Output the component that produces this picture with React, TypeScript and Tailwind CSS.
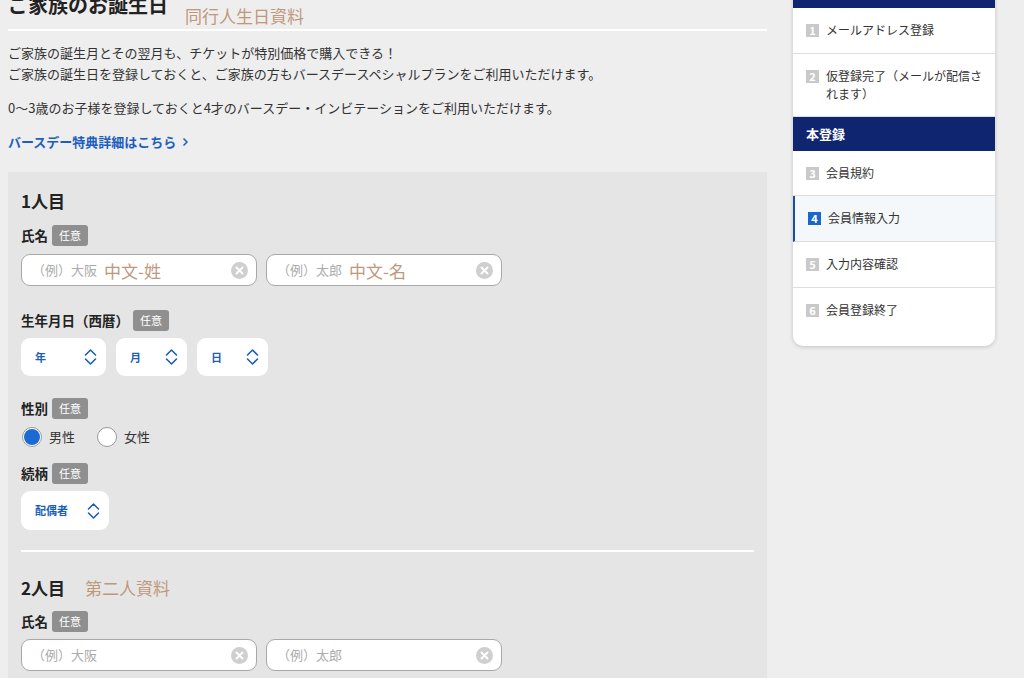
import React from "react";

const Badge = () => (
  <span className="inline-flex h-[21px] w-[36px] items-center justify-center rounded-[3px] bg-[#8f8f8f] text-[11px] leading-none text-white">
    任意
  </span>
);

const Label = ({ text }: { text: string }) => (
  <div className="flex h-[21px] items-center gap-[4px]">
    <span className="text-[13.5px] font-bold leading-none text-[#222]">{text}</span>
    <Badge />
  </div>
);

const ClearIcon = () => (
  <svg width="17" height="17" viewBox="0 0 17 17" className="shrink-0">
    <circle cx="8.5" cy="8.5" r="8.5" fill="#cfcfcf" />
    <path d="M5.5 5.5 L11.5 11.5 M11.5 5.5 L5.5 11.5" stroke="#fff" strokeWidth="2" strokeLinecap="round" />
  </svg>
);

const Chevrons = () => (
  <svg width="13" height="18" viewBox="0 0 13 18" className="shrink-0">
    <path d="M1.5 7 L6.5 2 L11.5 7 M1.5 11 L6.5 16 L11.5 11" stroke="#1b5fb6" strokeWidth="1.6" fill="none" strokeLinecap="round" strokeLinejoin="round" />
  </svg>
);

const TextInput = ({ placeholder, note }: { placeholder: string; note?: string }) => (
  <div className="flex h-[32px] w-[236px] items-center rounded-[9px] border border-[#a8a8a8] bg-white pl-[10px] pr-[8px]">
    <span className="text-[13px] text-[#ababab]">{placeholder}</span>
    {note && (
      <span className="ml-[7px] font-['Noto_Sans_CJK_TC',sans-serif] text-[17px] leading-none text-[#bf987b]">{note}</span>
    )}
    <span className="flex-1" />
    <ClearIcon />
  </div>
);

const Select = ({ text, w }: { text: string; w: string }) => (
  <div className={`flex h-[38px] items-center justify-between rounded-[9px] bg-white pl-[14px] pr-[9px] ${w}`}>
    <span className="text-[11px] font-bold text-[#1b5fb6]">{text}</span>
    <Chevrons />
  </div>
);

const Radio = ({ checked, label }: { checked?: boolean; label: string }) => (
  <div className="flex items-center gap-[7px]">
    <span className="flex h-[20px] w-[20px] items-center justify-center rounded-full border border-[#9a9a9a] bg-white">
      {checked && <span className="h-[16px] w-[16px] rounded-full bg-[#1a6ad6]" />}
    </span>
    <span className="text-[13px] text-[#333]">{label}</span>
  </div>
);

const NumBadge = ({ n, active }: { n: number; active?: boolean }) => (
  <span
    className={`mt-[2.5px] flex h-[13px] w-[13px] shrink-0 items-center justify-center text-[11px] font-bold leading-none text-white ${
      active ? "bg-[#1a66cc]" : "bg-[#c9c9c9]"
    }`}
  >
    {n}
  </span>
);

const Step = ({ n, text, active, cls }: { n: number; text: string; active?: boolean; cls: string }) => (
  <div
    className={`flex gap-[7px] border-b border-[#dedede] pl-[13px] pr-[12px] pt-[13px] ${
      active ? "border-l-2 border-l-[#1a4f96] bg-[#f4f8fb] pl-[11px]" : ""
    } ${cls}`}
  >
    <NumBadge n={n} active={active} />
    <span className="text-[12px] leading-[18px] text-[#333]">{text}</span>
  </div>
);

export default function App() {
  return (
    <div className="h-[678px] w-[1024px] overflow-hidden bg-[#eeeeee] font-['Noto_Sans_CJK_JP',sans-serif] text-[#333]">
      <div className="flex">
        {/* Main column */}
        <div className="ml-2 w-[759px]">
          <div className="mt-[-10px] flex h-[39px] items-start">
            <h1 className="text-[20px] font-bold leading-[30px] text-[#222]">ご家族のお誕生日</h1>
            <span className="ml-[17px] mt-[14px] font-['Noto_Sans_CJK_TC',sans-serif] text-[17px] leading-[24px] text-[#bf987b]">
              同行人生日資料
            </span>
          </div>
          <div className="h-[2px] bg-white" />
          <p className="mt-[11px] text-[13px] leading-[21px]">
            ご家族の誕生月とその翌月も、チケットが特別価格で購入できる！
            <br />
            ご家族の誕生日を登録しておくと、ご家族の方もバースデースペシャルプランをご利用いただけます。
          </p>
          <p className="mt-[13px] text-[13px] leading-[21px]">
            0〜3歳のお子様を登録しておくと4才のバースデー・インビテーションをご利用いただけます。
          </p>
          <div className="mt-[13px] flex items-center gap-[6px] text-[13px] font-bold leading-[21px] text-[#1d5fbf]">
            <span>バースデー特典詳細はこちら</span>
            <svg width="7" height="10" viewBox="0 0 7 10">
              <path d="M1.5 1.5 L5 5 L1.5 8.5" stroke="#1d5fbf" strokeWidth="1.5" fill="none" />
            </svg>
          </div>

          {/* Form panel */}
          <div className="mt-[20px] bg-[#e5e5e5] px-[13px] pt-[16px] pb-[20px]">
            <div className="text-[17px] font-bold leading-[26px] text-[#222]">1人目</div>
            <div className="mt-[11px]">
              <Label text="氏名" />
            </div>
            <div className="mt-[8px] flex gap-[9px]">
              <TextInput placeholder="（例）大阪" note="中文-姓" />
              <TextInput placeholder="（例）太郎" note="中文-名" />
            </div>
            <div className="mt-[24px]">
              <Label text="生年月日（西暦）" />
            </div>
            <div className="mt-[7px] flex gap-[10px]">
              <Select text="年" w="w-[85px]" />
              <Select text="月" w="w-[71px]" />
              <Select text="日" w="w-[71px]" />
            </div>
            <div className="mt-[22px]">
              <Label text="性別" />
            </div>
            <div className="mt-[8px] flex gap-[22px] pl-[1px]">
              <Radio checked label="男性" />
              <Radio label="女性" />
            </div>
            <div className="mt-[16px]">
              <Label text="続柄" />
            </div>
            <div className="mt-[7px] flex">
              <Select text="配偶者" w="w-[88px] h-[39px]" />
            </div>
            <div className="mt-[20px] h-[2px] bg-white" />
            <div className="mt-[23px] flex items-center">
              <span className="text-[17px] font-bold leading-[26px] text-[#222]">2人目</span>
              <span className="ml-[20px] font-['Noto_Sans_CJK_TC',sans-serif] text-[17px] leading-[26px] text-[#bf987b]">第二人資料</span>
            </div>
            <div className="mt-[10px]">
              <Label text="氏名" />
            </div>
            <div className="mt-[7px] flex gap-[9px]">
              <TextInput placeholder="（例）大阪" />
              <TextInput placeholder="（例）太郎" />
            </div>
          </div>
        </div>

        {/* Sidebar */}
        <div className="ml-[26px] mt-[-26px] w-[202px] self-start overflow-hidden rounded-b-[10px] bg-white shadow-[0_1px_4px_rgba(0,0,0,0.18)]">
          <div className="h-[34px] bg-[#0f2570]" />
          <Step n={1} text="メールアドレス登録" cls="pb-[14px]" />
          <Step n={2} text="仮登録完了（メールが配信されます）" cls="pb-[13px]" />
          <div className="flex h-[34px] items-center bg-[#0f2570] px-[13px] text-[13px] font-bold text-white">本登録</div>
          <Step n={3} text="会員規約" cls="pb-[13px]" />
          <Step n={4} text="会員情報入力" active cls="pb-[14px]" />
          <Step n={5} text="入力内容確認" cls="pb-[14px]" />
          <Step n={6} text="会員登録終了" cls="pb-[27px] border-b-0" />
        </div>
      </div>
    </div>
  );
}
